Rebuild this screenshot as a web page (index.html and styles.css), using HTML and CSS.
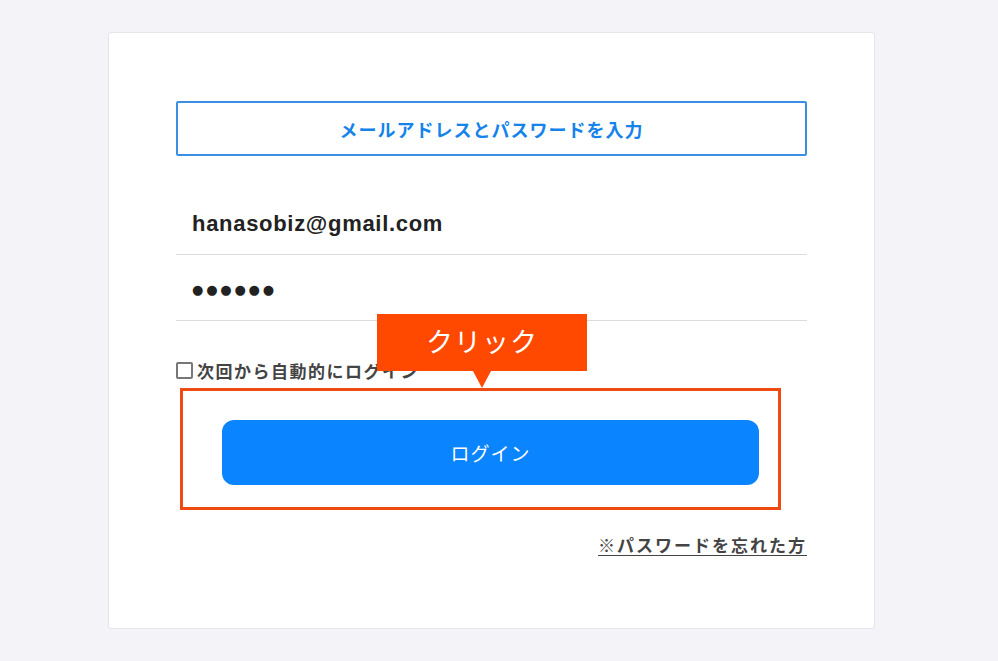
FILE: index.html
```html
<!DOCTYPE html>
<html lang="ja">
<head>
    <meta charset="UTF-8">
    <meta name="viewport" content="width=device-width, initial-scale=1.0">
    <title>ログイン</title>
    <link rel="stylesheet" href="styles.css">
</head>
<body>
    <div class="card">
        <div class="tab">メールアドレスとパスワードを入力</div>
        <div class="field field-email">hanasobiz@gmail.com</div>
        <div class="field field-pass">●●●●●●</div>
        <label class="remember">
            <span class="check"></span>
            <span class="remember-text">次回から自動的にログイン</span>
        </label>
        <div class="highlight">
            <div class="callout">クリック</div>
            <a href="#" class="btn-login">ログイン</a>
        </div>
        <div class="forgot-row">
            <a href="#" class="forgot">※パスワードを忘れた方</a>
        </div>
    </div>
</body>
</html>
```

FILE: styles.css
```css
body {
    margin: 0;
    padding: 0;
    background: #f4f4f8;
    font-family: "Noto Sans CJK JP", "Liberation Sans", sans-serif;
    color: #333;
}
.card {
    box-sizing: border-box;
    width: 767px;
    height: 597px;
    margin: 32px 0 0 108px;
    padding: 68px 67px 0 67px;
    background-color: #fff;
    border: 1px solid #e4e4ea;
    border-radius: 3px;
}
.tab {
    box-sizing: border-box;
    height: 55px;
    border: 2px solid #3a8fe4;
    border-radius: 2px;
    display: flex;
    align-items: center;
    justify-content: center;
    color: #1683ea;
    font-size: 18px;
    font-weight: bold;
    letter-spacing: 1px;
}
.field {
    height: 65px;
    border-bottom: 1px solid #dcdcdc;
    display: flex;
    align-items: center;
    padding-left: 16px;
    color: #222;
}
.field-email {
    margin-top: 33px;
    padding-top: 4px;
    height: 61px;
    font-family: "Liberation Sans", Arial, sans-serif;
    font-size: 22px;
    font-weight: bold;
    letter-spacing: 0.7px;
}
.field-pass {
    font-family: "DejaVu Sans", sans-serif;
    font-size: 13px;
    letter-spacing: 2.8px;
    padding-top: 4px;
    height: 61px;
}
.remember {
    display: flex;
    align-items: center;
    margin-top: 39px;
    height: 20px;
    color: #444;
    font-size: 17px;
    font-weight: bold;
    letter-spacing: 1.5px;
}
.check {
    box-sizing: border-box;
    width: 17px;
    height: 17px;
    border: 2px solid #777;
    border-radius: 2px;
    margin-right: 4px;
}
.highlight {
    position: relative;
    box-sizing: border-box;
    width: 601px;
    height: 122px;
    margin: 8px 0 0 4px;
    padding-top: 29px;
    border: 3px solid #ee4a12;
}
.btn-login {
    display: flex;
    align-items: center;
    justify-content: center;
    width: 537px;
    height: 65px;
    margin-left: 39px;
    background-color: #0a84ff;
    border-radius: 12px;
    color: #fff;
    text-decoration: none;
    font-size: 19px;
    letter-spacing: 1px;
}
.callout {
    position: absolute;
    left: 194px;
    top: -77px;
    width: 210px;
    height: 57px;
    background-color: #ff4800;
    color: #fff;
    font-size: 27px;
    letter-spacing: 1px;
    display: flex;
    align-items: center;
    justify-content: center;
    padding-bottom: 4px;
    box-sizing: border-box;
}
.callout::after {
    content: '';
    position: absolute;
    left: 50%;
    bottom: -17px;
    margin-left: -9px;
    border-left: 9px solid transparent;
    border-right: 9px solid transparent;
    border-top: 17px solid #ff4800;
}
.forgot-row {
    display: flex;
    justify-content: flex-end;
    margin-top: 22px;
}
.forgot {
    color: #444;
    font-size: 17px;
    font-weight: bold;
    letter-spacing: 2px;
    text-decoration: underline;
    text-underline-offset: 3px;
}
```
